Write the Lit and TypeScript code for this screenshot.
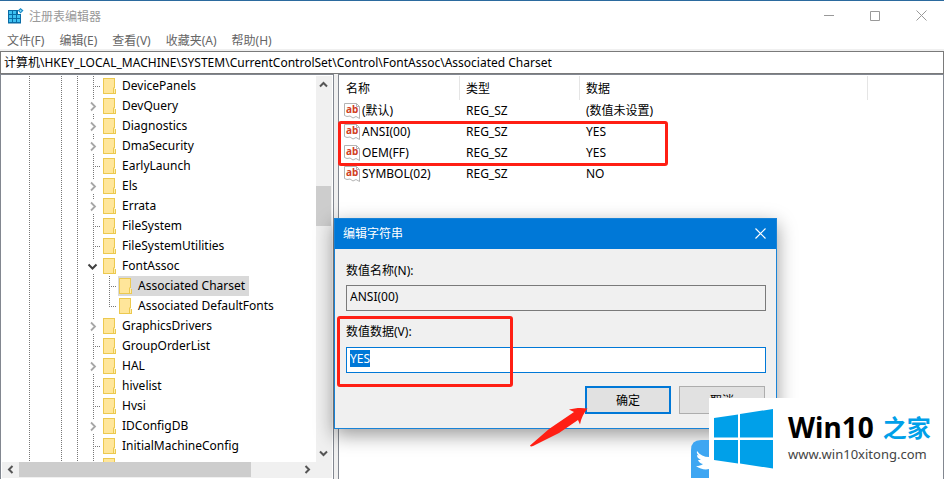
import { LitElement, html, css, svg, nothing } from "lit";
import { customElement, property, query } from "lit/decorators.js";
import { classMap } from "lit/directives/class-map.js";

type Twist = "none" | "closed" | "open";

interface TreeNode {
  name: string;
  twist: Twist;
  child?: boolean;
  last?: boolean;
  selected?: boolean;
}

interface RegValue {
  name: string;
  type: string;
  data: string;
}

const NODES: TreeNode[] = [
  { name: "DevicePanels", twist: "none" },
  { name: "DevQuery", twist: "closed" },
  { name: "Diagnostics", twist: "closed" },
  { name: "DmaSecurity", twist: "closed" },
  { name: "EarlyLaunch", twist: "none" },
  { name: "Els", twist: "closed" },
  { name: "Errata", twist: "closed" },
  { name: "FileSystem", twist: "none" },
  { name: "FileSystemUtilities", twist: "none" },
  { name: "FontAssoc", twist: "open" },
  { name: "Associated Charset", twist: "none", child: true, selected: true },
  { name: "Associated DefaultFonts", twist: "none", child: true, last: true },
  { name: "GraphicsDrivers", twist: "closed" },
  { name: "GroupOrderList", twist: "none" },
  { name: "HAL", twist: "closed" },
  { name: "hivelist", twist: "none" },
  { name: "Hvsi", twist: "none" },
  { name: "IDConfigDB", twist: "closed" },
  { name: "InitialMachineConfig", twist: "none" },
  { name: "", twist: "none" },
];

const VALUES: RegValue[] = [
  { name: "(默认)", type: "REG_SZ", data: "(数值未设置)" },
  { name: "ANSI(00)", type: "REG_SZ", data: "YES" },
  { name: "OEM(FF)", type: "REG_SZ", data: "YES" },
  { name: "SYMBOL(02)", type: "REG_SZ", data: "NO" },
];

const base = css`
  * {
    box-sizing: border-box;
  }
  button,
  input {
    font: inherit;
    color: inherit;
    margin: 0;
    padding: 0;
    border: 0;
    border-radius: 0;
    background: none;
    outline: none;
  }
  svg {
    display: block;
    flex: none;
  }
`;

@customElement("reg-tree")
export class RegTree extends LitElement {
  static styles = [
    base,
    css`
      :host {
        display: grid;
        grid-template: minmax(0, 1fr) 16px / minmax(0, 1fr) 16px;
        border: 1px solid #828790;
        padding: 1px;
        background: #fff;
        min-height: 0;
      }
      .rows {
        overflow: hidden;
        min-height: 0;
        list-style: none;
        margin: 0;
        padding: 0;
      }
      .row {
        display: flex;
        height: 20px;
        line-height: 20px;
        white-space: nowrap;
      }
      .guide,
      .twist {
        flex: none;
        width: 16px;
        background: repeating-linear-gradient(#777 0 1px, transparent 1px 2px)
          15px 0 / 1px 100% no-repeat;
      }
      .guide.first {
        width: 28px;
        background-position: 27px 0;
      }
      .guide.wide {
        width: 32px;
        background-position: 31px 0;
      }
      .twist {
        width: 24px;
      }
      .twist.leaf {
        background:
          repeating-linear-gradient(#777 0 1px, transparent 1px 2px) 15px 0 /
            1px 100% no-repeat,
          repeating-linear-gradient(90deg, #777 0 1px, transparent 1px 2px) 15px
            10px / 7px 1px no-repeat;
      }
      .twist.leaf.last {
        background-size: 1px 10px, 7px 1px;
      }
      .mark {
        display: block;
        width: 12px;
        height: 13px;
        margin: 4px 0 3px 9px;
        background: #fff;
      }
      .label {
        display: flex;
        gap: 6px;
        padding: 0 4px 0 1px;
      }
      .selected {
        background: #d9d9d9;
      }
      .folder {
        margin-top: 2px;
      }
      .bar {
        display: flex;
        background: #f0f0f0;
      }
      .vertical {
        flex-direction: column;
      }
      .arrow {
        display: grid;
        place-items: center;
        width: 17px;
        height: 15px;
        flex: none;
      }
      .vertical .arrow {
        width: 15px;
        height: 17px;
      }
      .track {
        flex: 1;
        display: flex;
        min-height: 0;
      }
      .vertical .track {
        flex-direction: column;
        width: 100%;
      }
      .thumb {
        background: #cdcdcd;
      }
      .vertical .thumb {
        height: 40px;
        margin-top: 93px;
        width: 15px;
      }
      .horizontal .thumb {
        width: 83%;
        height: 15px;
      }
    `,
  ];

  private chevron(d: string) {
    return html`<svg width="9" height="9" viewBox="0 0 9 9">
      <path d=${d} fill="none" stroke="#555" stroke-width="2"></path>
    </svg>`;
  }

  private twist(kind: Twist) {
    if (kind === "none") return nothing;
    return html`<svg class="mark" viewBox="0 0 12 13">
      ${kind === "open"
        ? svg`<path d="M1.500 4.500 5.500 8.500 9.500 4.500" fill="none" stroke="#404040" stroke-width="2"/>`
        : svg`<path d="M4 2.500 8 6.500 4 10.500" fill="none" stroke="#a6a6a6" stroke-width="1.800"/>`}
    </svg>`;
  }

  private row(n: TreeNode) {
    const leaf = n.twist === "none";
    return html`<li class="row">
      <span class="guide first"></span><span class="guide wide"></span
      ><span class="guide"></span>
      ${n.child ? html`<span class="guide"></span>` : nothing}
      <span class=${classMap({ twist: true, leaf, last: !!n.last })}
        >${this.twist(n.twist)}</span
      >
      <span class=${classMap({ label: true, selected: !!n.selected })}>
        <svg class="folder" width="13" height="16" viewBox="0 0 13 16">
          <path d="M0 0H12V11H13V16H0Z" fill="#ecc94f"></path>
          <path d="M1 1H11V15H1Z" fill="#ffe69a"></path>
          <path d="M11 10H12V15H10.500V11Z" fill="#ffeeb0"></path>
          <path d="M10.500 9.500V15" stroke="#ecc94f"></path>
        </svg>
        ${n.name}
      </span>
    </li>`;
  }

  render() {
    return html`
      <ul class="rows">
        ${NODES.map((n) => this.row(n))}
      </ul>
      <div class="bar vertical">
        <button class="arrow" aria-label="向上">${this.chevron("M1 6.500 4.500 3 8 6.500")}</button>
        <div class="track"><div class="thumb"></div></div>
        <button class="arrow" aria-label="向下">${this.chevron("M1 2.500 4.500 6 8 2.500")}</button>
      </div>
      <div class="bar horizontal">
        <button class="arrow" aria-label="向左">${this.chevron("M6.500 1 3 4.500 6.500 8")}</button>
        <div class="track"><div class="thumb"></div></div>
        <button class="arrow" aria-label="向右">${this.chevron("M2.500 1 6 4.500 2.500 8")}</button>
      </div>
      <div class="bar"></div>
    `;
  }
}

@customElement("reg-values")
export class RegValues extends LitElement {
  static styles = [
    base,
    css`
      :host {
        display: block;
        position: relative;
        border: 1px solid #828790;
        padding-top: 1px;
        background: #fff;
      }
      table {
        width: 100%;
        table-layout: fixed;
        border-collapse: separate;
        border-spacing: 0;
      }
      .name {
        width: 121px;
      }
      .type {
        width: 120px;
      }
      .data {
        width: 288px;
      }
      th {
        height: 24px;
        padding: 0 6px;
        font-weight: 400;
        text-align: left;
        border-right: 1px solid #e5e5e5;
      }
      th:first-child {
        padding-left: 7px;
      }
      th:last-child {
        border: 0;
      }
      td {
        height: 21px;
        padding: 0 6px;
        line-height: 20px;
        white-space: nowrap;
      }
      .cell {
        display: flex;
        align-items: center;
        gap: 2px;
        margin-left: -1px;
      }
      .ring {
        position: absolute;
        left: -1px;
        top: 46px;
        width: 330px;
        height: 45px;
        border: 3px solid #ff1f14;
        border-radius: 3px;
      }
      .glyph {
        font: 700 10px "Noto Sans", sans-serif;
      }
    `,
  ];

  render() {
    return html`
      <table>
        <thead>
          <tr>
            <th class="name">名称</th>
            <th class="type">类型</th>
            <th class="data">数据</th>
            <th></th>
          </tr>
        </thead>
        <tbody>
          ${VALUES.map(
            (v) => html`<tr>
              <td>
                <div class="cell">
                  <svg width="16" height="16" viewBox="0 0 16 16">
                    <path
                      d="M.5 .5H12.500L15.500 3.500V15.500L12 13.500 9 15 6 13 3 13.500 .5 12.500Z"
                      fill="#fff"
                      stroke="#b4b4b4"
                    ></path>
                    <path d="M12.500 .5V3.500H15.500" fill="none" stroke="#b4b4b4"></path>
                    <text class="glyph" x="2" y="10" fill="#d1401f">ab</text>
                  </svg>
                  ${v.name}
                </div>
              </td>
              <td>${v.type}</td>
              <td>${v.data}</td>
              <td></td>
            </tr>`
          )}
        </tbody>
      </table>
      <div class="ring"></div>
    `;
  }
}

@customElement("edit-string")
export class EditString extends LitElement {
  static styles = [
    base,
    css`
      :host {
        display: block;
        border: 1px solid #1883d7;
        background: #f0f0f0;
        box-shadow: 0 6px 18px rgba(0, 0, 0, 0.4);
      }
      .title {
        display: flex;
        align-items: center;
        justify-content: space-between;
        height: 30px;
        padding: 0 0 2px 8px;
        color: #fff;
        background: #0078d7;
      }
      .close {
        display: grid;
        place-items: center;
        width: 32px;
        height: 28px;
      }
      .form {
        display: flex;
        flex-direction: column;
        padding: 12px 10px 14px 11px;
      }
      label {
        height: 20px;
        line-height: 20px;
        margin-bottom: 4px;
      }
      .field {
        height: 26px;
        padding: 0 3px 3px;
        margin-bottom: 11px;
        border: 1px solid #7a7a7a;
        line-height: 17px;
      }
      .value {
        background: #fff;
        border-color: #0078d7;
        margin: 1px 0 13px;
      }
      .value::selection {
        background: #0078d7;
        color: #fff;
      }
      .buttons {
        display: flex;
        justify-content: flex-end;
        gap: 8px;
        padding-right: 1px;
      }
      .push {
        width: 86px;
        height: 28px;
        padding-bottom: 1px;
        background: #e1e1e1;
        border: 1px solid #adadad;
      }
      .default {
        border: 2px solid #0078d7;
      }
      .ring {
        position: absolute;
        left: 2px;
        top: 97px;
        width: 176px;
        height: 71px;
        border: 3px solid #ff1f14;
        border-radius: 3px;
      }
      .pointer {
        position: absolute;
        left: 194px;
        top: 188px;
      }
    `,
  ];

  @property() name = "";
  @property() value = "";
  @query("#value") private field!: HTMLInputElement;

  firstUpdated() {
    this.field.focus();
    this.field.select();
  }

  render() {
    return html`
      <div class="title">
        编辑字符串
        <button class="close" aria-label="关闭">
          <svg width="11" height="11" viewBox="0 0 11 11">
            <path d="M.5 .5 10.500 10.500M10.500 .5 .5 10.500" stroke="#fff" stroke-width="1.200"></path>
          </svg>
        </button>
      </div>
      <div class="form">
        <label for="name">数值名称(N):</label>
        <input class="field" id="name" readonly .value=${this.name} />
        <label for="value">数值数据(V):</label>
        <input class="field value" id="value" spellcheck="false" .value=${this.value} />
        <div class="buttons">
          <button class="push default">确定</button>
          <button class="push">取消</button>
        </div>
      </div>
      <div class="ring"></div>
      <svg class="pointer" width="60" height="42" viewBox="0 0 60 42">
        <path
          d="M58.500 1.500C52 .5 46 1 40 2.500L45 5 20 22 1 38.500Q1.500 40 4 39L30 26 49 13 51 17.500C52 11 55 6 58.500 1.500Z"
          fill="#ff1f14"
        ></path>
      </svg>
    `;
  }
}

@customElement("site-badge")
export class SiteBadge extends LitElement {
  static styles = [
    base,
    css`
      :host {
        display: flex;
        align-items: flex-end;
      }
      .bird {
        width: 18px;
        height: 38px;
      }
      .card {
        display: flex;
        gap: 15px;
        width: 233px;
        height: 80px;
        padding: 11px 0 0 5px;
        background: #fff;
      }
      .name {
        display: flex;
        gap: 9px;
        height: 37px;
        line-height: 37px;
        white-space: nowrap;
        font-size: 28px;
        font-weight: 700;
        color: #000;
      }
      .home {
        font-size: 24px;
        color: #00a0e9;
      }
      .url {
        display: block;
        line-height: 16px;
        font-size: 13px;
        color: #444;
        text-decoration: none;
      }
    `,
  ];

  render() {
    return html`
      <svg class="bird" viewBox="0 0 18 38">
        <path d="M18 0H10Q0 0 0 10V38H18Z" fill="#3ea6f2"></path>
        <path
          d="M6 11C9 15 13 17 18 17V29C14 30 9 29 5 26 8 26 10 25.500 12 24 9 23.500 8 22 7 20H10C7 18.500 6 17 6 15L8 15.500C6 14 5.500 12.500 6 11Z"
          fill="#fff"
        ></path>
      </svg>
      <div class="card">
        <svg width="59" height="60" viewBox="0 0 59 60">
          <path
            d="M0 9 24 5.500V28.500H0ZM26 5 59 0V28.500H26ZM0 31H24V54.500L0 51ZM26 31H59V59.500L26 54.500Z"
            fill="#00a0e9"
          ></path>
        </svg>
        <div>
          <div class="name"><span>Win10</span><span class="home">之家</span></div>
          <a class="url" href="#">www.win10xitong.com</a>
        </div>
      </div>
    `;
  }
}

@customElement("app-root")
export class AppRoot extends LitElement {
  static styles = [
    base,
    css`
      :host {
        display: flex;
        flex-direction: column;
        position: relative;
        height: 100vh;
        overflow: hidden;
        border-top: 1px solid #2b6a9e;
        background: #fff;
        color: #000;
        font: 12px "Noto Sans", "Noto Sans CJK SC", sans-serif;
      }
      .title {
        display: flex;
        align-items: center;
        height: 29px;
        padding-left: 8px;
        color: #999;
      }
      .caption {
        flex: 1;
        padding-left: 5px;
      }
      .control {
        display: grid;
        place-items: center;
        width: 46px;
        height: 29px;
      }
      .menu {
        display: flex;
        align-items: center;
        gap: 15px;
        height: 21px;
        padding: 0 7px;
        border-bottom: 2px solid #f0f0f0;
        color: #666;
      }
      .menu button {
        white-space: nowrap;
      }
      .address {
        height: 23px;
        padding: 0 3px 2px;
        border: 1px solid #7a7a7a;
      }
      .panes {
        flex: 1;
        display: grid;
        grid-template-columns: minmax(0, 334fr) minmax(0, 606fr);
        gap: 4px;
        min-height: 0;
        background: #f0f0f0;
      }
      .dialog {
        position: absolute;
        left: 334px;
        top: 217px;
        width: 443px;
      }
      .badge {
        position: absolute;
        right: 2px;
        bottom: 2px;
      }
    `,
  ];

  render() {
    return html`
      <header class="title">
        <svg width="16" height="16" viewBox="0 0 16 16">
          <path d="M0 2H10V6H13V15.500H0Z" fill="#0a6ca6"></path>
          <path
            d="M1 3H4V6H1ZM5 3H8V6H5ZM1 7H4V10H1ZM5 7H8V10H5ZM9 7H12V10H9ZM1 11H4V14H1ZM5 11H8V14H5ZM9 11H12V14H9Z"
            fill="#3fc0f0"
          ></path>
          <path d="M12.500 0 15.500 2.500 12.500 5.500 9.800 2.500Z" fill="#1a8cc8"></path>
          <path d="M12.500 1.500 13.800 2.700 12.500 4 11.300 2.700Z" fill="#8edcf8"></path>
        </svg>
        <span class="caption">注册表编辑器</span>
        <button class="control" aria-label="最小化">
          <svg width="11" height="11" viewBox="0 0 11 11">
            <path d="M0 5.500H10" stroke="#999"></path>
          </svg>
        </button>
        <button class="control" aria-label="最大化">
          <svg width="10" height="10" viewBox="0 0 10 10">
            <path d="M.5 .5H9.500V9.500H.5Z" fill="none" stroke="#999"></path>
          </svg>
        </button>
        <button class="control" aria-label="关闭">
          <svg width="11" height="11" viewBox="0 0 11 11">
            <path d="M.5 .5 10.500 10.500M10.500 .5 .5 10.500" stroke="#999"></path>
          </svg>
        </button>
      </header>
      <nav class="menu">
        ${["文件(F)", "编辑(E)", "查看(V)", "收藏夹(A)", "帮助(H)"].map(
          (m) => html`<button>${m}</button>`
        )}
      </nav>
      <input
        class="address"
        aria-label="地址"
        spellcheck="false"
        value="计算机\\HKEY_LOCAL_MACHINE\\SYSTEM\\CurrentControlSet\\Control\\FontAssoc\\Associated Charset"
      />
      <main class="panes">
        <reg-tree></reg-tree>
        <reg-values></reg-values>
      </main>
      <edit-string class="dialog" name="ANSI(00)" value="YES"></edit-string>
      <site-badge class="badge"></site-badge>
    `;
  }
}
